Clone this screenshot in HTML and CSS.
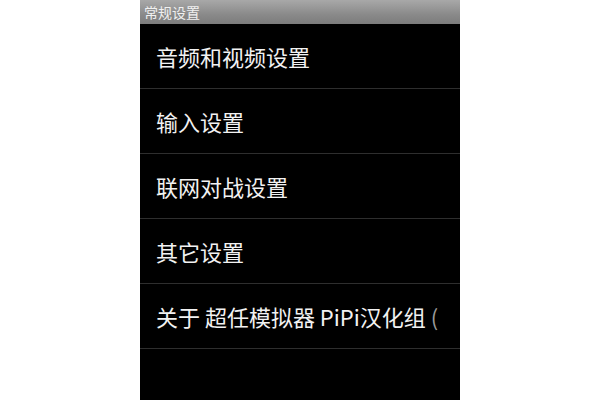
FILE: index.html
```html
<!DOCTYPE html>
<html lang="zh">
<head>
<meta charset="utf-8">
<link rel="stylesheet" href="styles.css">
</head>
<body>
<div class="screen">
  <div class="titlebar">常规设置</div>
  <ul class="menu">
    <li class="item">音频和视频设置</li>
    <li class="item">输入设置</li>
    <li class="item">联网对战设置</li>
    <li class="item">其它设置</li>
    <li class="item">关于 超任模拟器 PiPi汉化组 <span class="fade">(</span></li>
  </ul>
</div>
</body>
</html>
```
FILE: styles.css
```css
html, body {
  margin: 0;
  padding: 0;
  background: #ffffff;
  height: 400px;
  overflow: hidden;
}
body {
  display: flex;
  justify-content: center;
  font-family: "Noto Sans CJK SC", "Noto Sans", sans-serif;
}
.screen {
  width: 320px;
  height: 400px;
  background: #000;
  display: flex;
  flex-direction: column;
}
.titlebar {
  height: 24px;
  line-height: 24px;
  padding-left: 4px;
  font-size: 14px;
  color: #f0f0f0;
  background: linear-gradient(#a8a8a8, #8a8a8a 60%, #7c7c7c);
  white-space: nowrap;
}
.menu {
  list-style: none;
  margin: 0;
  padding: 0;
}
.item {
  height: 64px;
  line-height: 64px;
  padding-left: 16px;
  font-size: 22px;
  color: #f2f2f2;
  border-bottom: 1px solid #2e2e2e;
  white-space: nowrap;
  overflow: hidden;
}
.fade {
  color: #9a9a9a;
}
```
